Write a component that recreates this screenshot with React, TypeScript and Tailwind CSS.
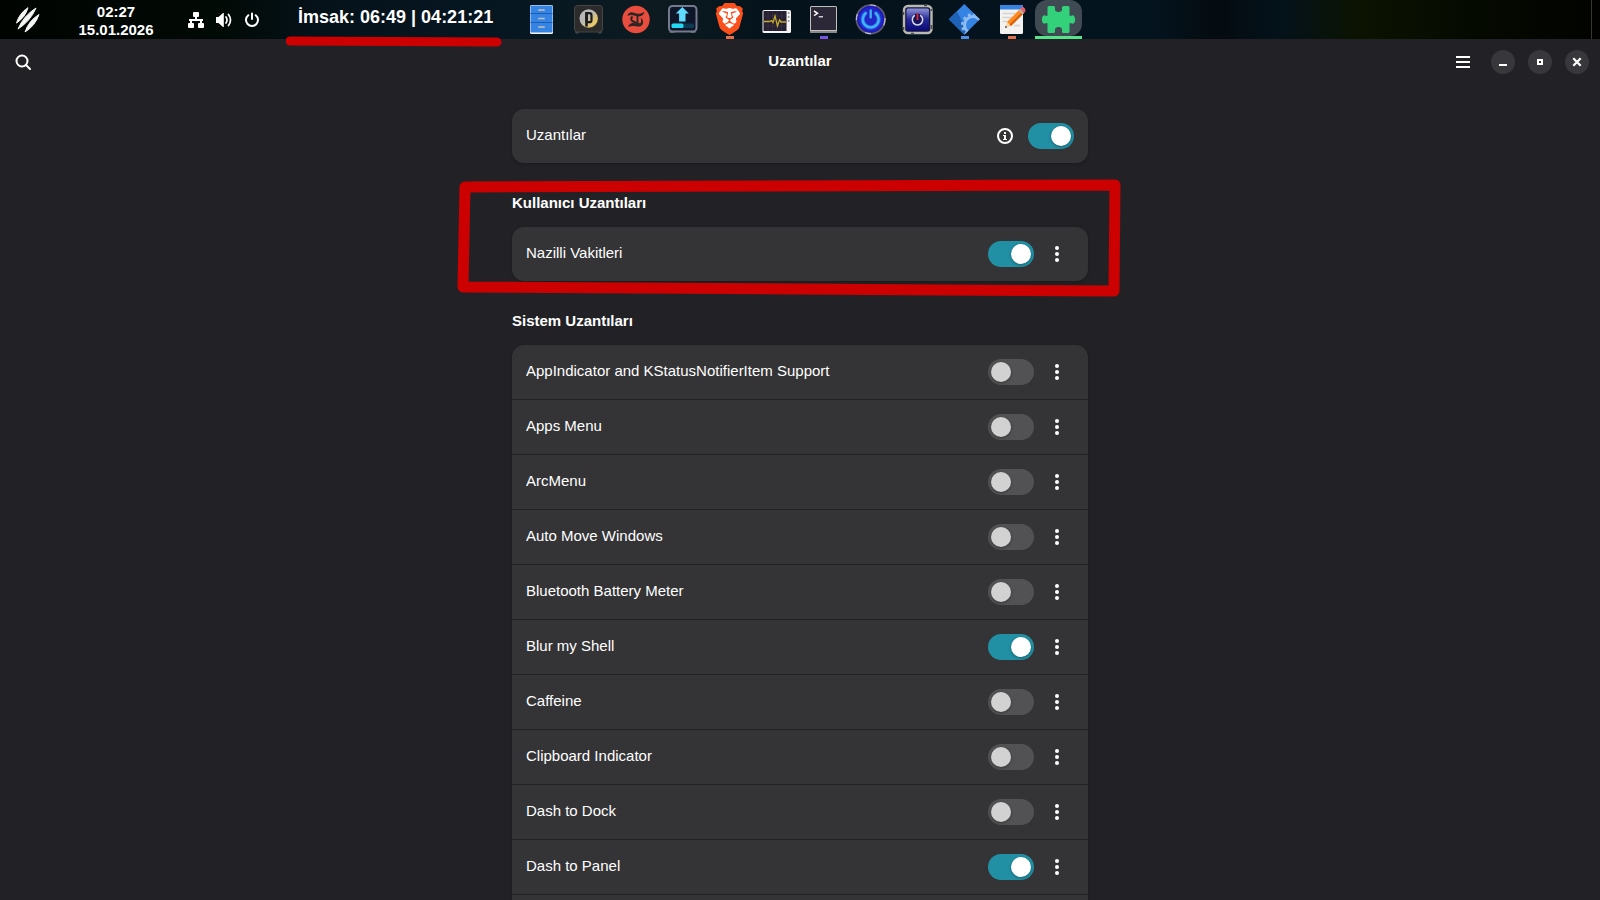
import { useState } from 'react'
import type { ReactNode } from 'react'
import { SiBrave } from 'react-icons/si'

interface Extension {
  id: string
  name: string
  enabled: boolean
}

interface DockItem {
  name: string
  icon: ReactNode
  indicator?: string
  active?: boolean
}

const userExtensions: Extension[] = [
  { id: 'nazilli-vakitleri', name: 'Nazilli Vakitleri', enabled: true },
]

const systemExtensions: Extension[] = [
  { id: 'appindicator', name: 'AppIndicator and KStatusNotifierItem Support', enabled: false },
  { id: 'apps-menu', name: 'Apps Menu', enabled: false },
  { id: 'arcmenu', name: 'ArcMenu', enabled: false },
  { id: 'auto-move-windows', name: 'Auto Move Windows', enabled: false },
  { id: 'bluetooth-battery', name: 'Bluetooth Battery Meter', enabled: false },
  { id: 'blur-my-shell', name: 'Blur my Shell', enabled: true },
  { id: 'caffeine', name: 'Caffeine', enabled: false },
  { id: 'clipboard-indicator', name: 'Clipboard Indicator', enabled: false },
  { id: 'dash-to-dock', name: 'Dash to Dock', enabled: false },
  { id: 'dash-to-panel', name: 'Dash to Panel', enabled: true },
]

// All dock icons are drawn on a 47x39 slot
const dockItems: DockItem[] = [
  {
    name: 'Dosyalar',
    icon: (
      <>
        <rect x="12" y="5" width="23" height="29" rx="1.5" fill="#f6f5f4" />
        <rect x="12.5" y="5.5" width="22" height="27" rx="1" fill="#3584e4" />
        <path d="M12.5 13.5h22M12.5 22.5h22" stroke="#1a5fb4" strokeWidth="1" />
        <path d="M21 11v-1h5v1M21 19.500v-1h5v1M21 28v-1h5v1" fill="none" stroke="#c0bfbc" strokeWidth="1.3" />
      </>
    ),
  },
  {
    name: 'Plank',
    icon: (
      <>
        <defs>
          <linearGradient id="coin" x1="0" y1="0" x2="1" y2="1">
            <stop offset="0.4" stopColor="#b8b8b8" />
            <stop offset="0.75" stopColor="#e6c66a" />
          </linearGradient>
        </defs>
        <path d="M10 29h27v3l-1 1.5h-2.500v-1.500h-20v1.500h-2.500l-1-1.500z" fill="#4a4a4a" />
        <rect x="9.500" y="5.500" width="28" height="26.500" rx="3" fill="#2b2b2b" stroke="#454545" />
        <circle cx="23.700" cy="18.500" r="9.200" fill="url(#coin)" />
        <path d="M21.500 12v14.500" stroke="#1b1b1b" strokeWidth="2.600" />
        <rect x="21.500" y="13.200" width="5" height="9" rx="2" fill="none" stroke="#1b1b1b" strokeWidth="2.200" />
      </>
    ),
  },
  {
    name: 'Takvim',
    icon: (
      <>
        <circle cx="24" cy="19.500" r="13.700" fill="#e74c3c" />
        <path d="M15.500 16c.5-3.500 3.500-4.500 6.500-3.200 3.300 1.400 6 1.700 10.500-1-.8 3.600-3.500 5-7 4.500-3.500-.6-6.500-2.300-10-.3z" fill="#2c2523" />
        <path d="M20.500 16.500c-2.200 2-1.500 4 .8 5s4.200 2.500 6.700 3" fill="none" stroke="#2c2523" strokeWidth="2" />
        <path d="M25.500 15.500v8" stroke="#2c2523" strokeWidth="1.800" />
        <path d="M28.500 17.500c3.500 2.500 3.500 6.500.5 8.500-3 1.800-7.500-1.500-13 1 1-3 3.500-4.500 6.500-3.700 3 .7 5 1.200 6-.3s1-3.300 0-5.500z" fill="#2c2523" />
      </>
    ),
  },
  {
    name: 'Yükleyici',
    icon: (
      <>
        <path d="M10.500 30h26v3h-5v-1h-16v1h-5z" fill="#555a68" />
        <rect x="10" y="6" width="27.500" height="25.500" rx="3.500" fill="#10162a" stroke="#747b8c" strokeWidth="2" />
        <path d="M23.300 7l6.500 6.500h-3.300v8h-6.400v-8h-3.300z" fill="#5fdcff" />
        <rect x="12.500" y="23.500" width="22.500" height="4.500" rx="1.500" fill="#0c3a50" />
        <rect x="12.500" y="23.500" width="12" height="4.500" rx="1.500" fill="#22d9f5" />
      </>
    ),
  },
  {
    name: 'Brave',
    indicator: 'bg-[#e2714f]',
    icon: (
      <>
        <path d="M15 7h17l3 6-3 14-8.500 6-8.500-6-3-14z" fill="#fff" />
        <SiBrave x="7.500" y="3" size={32} color="#fb4f1c" />
      </>
    ),
  },
  {
    name: 'Sistem Monitörü',
    icon: (
      <>
        <rect x="9.500" y="10" width="28.500" height="23" rx="1.500" fill="#f6f5f4" />
        <rect x="10.500" y="11" width="23" height="20" fill="#241f31" />
        <path d="M15 11v20M19.500 11v20M24 11v20M28.500 11v20M10.500 16h23M10.500 21h23M10.500 26h23" stroke="#3d3846" strokeWidth="0.6" />
        <path d="M11 21.500h5.500l2-1 1.500 2 2-6.500 2.500 10 2-6 1.500 2h5" fill="none" stroke="#c4a92e" strokeWidth="1.300" />
        <g fill="#9a9996">
          <circle cx="35.700" cy="13" r="1" />
          <circle cx="35.700" cy="17" r="1" />
          <circle cx="35.700" cy="21" r="1" />
        </g>
      </>
    ),
  },
  {
    name: 'Uçbirim',
    indicator: 'bg-[#7a52e0]',
    icon: (
      <>
        <rect x="10" y="6" width="27" height="27" rx="1.500" fill="#c0bfbc" />
        <path d="M10 31h27v.5q0 1.500-1.500 1.500h-24q-1.500 0-1.500-1.500z" fill="#8a888c" />
        <rect x="11" y="7" width="25" height="23" rx="0.500" fill="#2d2838" />
        <path d="M14 11l3.500 2.300-3.500 2.300" fill="none" stroke="#f6f5f4" strokeWidth="1.500" />
        <path d="M18.700 16.800h4.300" stroke="#f6f5f4" strokeWidth="1.200" />
      </>
    ),
  },
  {
    name: 'Güç Yöneticisi',
    icon: (
      <>
        <circle cx="23.700" cy="19.300" r="14.300" fill="#2018b8" stroke="#5d5f6c" strokeWidth="1.600" />
        <circle cx="23.700" cy="19.300" r="14.300" fill="none" stroke="#c4c5cc" strokeWidth="1.200" strokeDasharray="6 16" />
        <circle cx="23.700" cy="19.300" r="12" fill="#2226c4" />
        <path d="M18.500 13.300a8 8 0 1 0 10.400 0" fill="none" stroke="#2a66e8" strokeWidth="4" strokeLinecap="round" />
        <path d="M18.500 13.300a8 8 0 1 0 10.400 0M23.700 10.500v7" fill="none" stroke="#3fb4f5" strokeWidth="2.300" strokeLinecap="round" />
      </>
    ),
  },
  {
    name: 'Oturum Kapat',
    icon: (
      <>
        <defs>
          <linearGradient id="glass" x1="0" y1="0" x2="0" y2="1">
            <stop offset="0" stopColor="#8d94d8" />
            <stop offset="0.5" stopColor="#252894" />
            <stop offset="1" stopColor="#0a0a78" />
          </linearGradient>
        </defs>
        <rect x="10" y="6" width="27.500" height="27" rx="4" fill="#151540" stroke="#b9b9b2" strokeWidth="2.400" />
        <path d="M9.500 12v3M9.500 27v3M17 33.500h3M37.500 9v2M30 5.500h3M37.500 25v4" stroke="#4b4b45" strokeWidth="1.500" />
        <rect x="12.500" y="8.500" width="22.500" height="22" rx="1.500" fill="url(#glass)" />
        <circle cx="23.500" cy="19.800" r="6.300" fill="#14145e" />
        <path d="M20.800 15.300a5.200 5.200 0 1 0 5.400 0" fill="none" stroke="#d9d9ea" strokeWidth="1.600" />
        <path d="M23.500 13.500v6.500" stroke="#e0252c" strokeWidth="1.800" />
      </>
    ),
  },
  {
    name: 'Ayarlar',
    indicator: 'bg-[#4a90e2]',
    icon: (
      <>
        <defs>
          <clipPath id="diamond">
            <path d="M23.300 4l15.500 15.300-15.500 15.500-15.500-15.500z" />
          </clipPath>
        </defs>
        <g clipPath="url(#diamond)">
          <rect x="7" y="3" width="33" height="33" fill="#3584e4" />
          <path d="M7 19.300l8.500-8.500 14 25.200h-22.500z" fill="#1f63b8" />
          <circle cx="32" cy="25" r="8.500" fill="none" stroke="#8fbcf2" strokeWidth="3" />
          <circle cx="32" cy="25" r="10.800" fill="none" stroke="#8fbcf2" strokeWidth="2.400" strokeDasharray="2.830 2.830" />
        </g>
      </>
    ),
  },
  {
    name: 'Metin Düzenleyici',
    indicator: 'bg-[#e2714f]',
    icon: (
      <>
        <rect x="12" y="5" width="23" height="29" rx="1.500" fill="#f3f2f1" />
        <path d="M12 9.500v-3q0-1.500 1.500-1.500h20q1.500 0 1.500 1.500v3z" fill="#3584e4" />
        <path d="M14.500 13.500h13M14.500 17.500h9M14.500 21.500h5M26 25.500h6" stroke="#d5d3cf" strokeWidth="1.500" />
        <path d="M17 28l2-6 4 4z" fill="#f5d7a8" />
        <path d="M17 28l.8-2.200 1.400 1.400z" fill="#241f31" />
        <path d="M19 22l13-13 4 4-13 13z" fill="#ff8a1f" />
        <path d="M21.500 24.500l13-13 1.500 1.500-13 13z" fill="#d9600a" />
        <path d="M30.500 10.500l1.500-1.500 4 4-1.500 1.500z" fill="#b7b4ae" />
        <path d="M32 9l1.500-1.500q1.500-1 3 .5t.8 3.500l-1.300 1.500z" fill="#e8616b" />
      </>
    ),
  },
  {
    name: 'Uzantılar',
    active: true,
    icon: (
      <path
        d="M14 6h4q2.500 0 2 2.300c-.5 2.500 1 3.700 3.500 3.700s4-1.200 3.500-3.700q-.5-2.300 2-2.300h4q1.500 0 1.500 1.500v7.500q0 1.500 1.500.8q2.800-1.300 3.700 1.200q.8 2.500 0 5q-.9 2.500-3.700 1.200q-1.500-.7-1.500.8v7.500q0 1.500-1.500 1.500h-4q-2.500 0-2-2.300c.5-2.500-1-3.700-3.500-3.700s-4 1.200-3.500 3.700q.5 2.300-2 2.300h-4q-1.500 0-1.500-1.500v-7.500q0-1.500-1.500-.8q-2.800 1.300-3.700-1.200q-.8-2.500 0-5q.9-2.500 3.700-1.200q1.500.7 1.500-.8v-7.500q0-1.500 1.500-1.500z"
        fill="#33d17a"
      />
    ),
  },
]

function Switch({
  id,
  checked,
  onChange,
}: {
  id: string
  checked: boolean
  onChange: (checked: boolean) => void
}) {
  return (
    <input
      id={id}
      type="checkbox"
      role="switch"
      checked={checked}
      onChange={(e) => onChange(e.target.checked)}
      className="h-[26px] w-[46px] shrink-0 appearance-none rounded-full bg-[#525254] p-[3px] before:block before:size-5 before:rounded-full before:bg-[#d2d2d2] before:shadow-[0_1px_3px_rgba(0,0,0,0.35)] checked:bg-[#2190a4] checked:before:translate-x-5 checked:before:bg-white"
    />
  )
}

function ExtensionRow({ extension }: { extension: Extension }) {
  const [enabled, setEnabled] = useState(extension.enabled)

  return (
    <li className="flex items-center gap-1.5 px-3.5 py-2.5">
      <label htmlFor={extension.id} className="flex-1 truncate pb-0.5">
        {extension.name}
      </label>
      <Switch id={extension.id} checked={enabled} onChange={setEnabled} />
      <button
        type="button"
        aria-label={`${extension.name} seçenekleri`}
        className="flex size-[34px] items-center justify-center rounded-lg"
      >
        <svg viewBox="0 0 16 16" className="size-4" fill="#fff">
          <circle cx="8" cy="2" r="2" />
          <circle cx="8" cy="8" r="2" />
          <circle cx="8" cy="14" r="2" />
        </svg>
      </button>
    </li>
  )
}

function ExtensionGroup({
  title,
  extensions,
  children,
}: {
  title: string
  extensions: Extension[]
  children?: ReactNode
}) {
  return (
    <section className="relative mt-7">
      <h2 className="mb-3 leading-6 font-bold">{title}</h2>
      <ul className="divide-y divide-[#212124] rounded-xl bg-[#343436] shadow-[0_1px_3px_rgba(0,0,0,0.25)]">
        {extensions.map((extension) => (
          <ExtensionRow key={extension.id} extension={extension} />
        ))}
        {extensions.length > 1 && <li className="h-[54px]" />}
      </ul>
      {children}
    </section>
  )
}

function TopPanel() {
  return (
    <nav className="flex h-[39px] shrink-0 bg-[linear-gradient(90deg,#000401_0%,#020a06_14%,#05121a_20%,#061722_32%,#0d1b20_41%,#04121b_48%,#04141e_72%,#050b10_76%,#04121a_80%,#0c1301_85%,#050a01_92%,#020300_100%)]">
      <div className="flex w-[518px] shrink-0">
        <button type="button" aria-label="Etkinlikler" className="flex w-14 items-center justify-center">
          <svg viewBox="0 0 26 26" className="size-[26px]" fill="#f5f5f5" stroke="#f5f5f5" strokeLinejoin="round">
            <path d="M1.500 16Q4.200 6.300 13 .7 10.200 10.500 1.500 16z" />
            <path d="M3 22Q8.700 8.700 21 1 15.300 14.300 3 22z" />
            <path d="M10 25Q13.800 13.600 24 7.500 20.200 18.800 10 25z" />
          </svg>
        </button>
        <button type="button" className="flex w-[120px] flex-col items-center pt-[3px] leading-[18px] font-bold">
          <span>02:27</span>
          <span>15.01.2026</span>
        </button>
        <button type="button" aria-label="Sistem menüsü" className="flex w-[122px] items-center gap-3 pl-3">
          <svg viewBox="0 0 16 16" className="size-4" fill="#fff">
            <rect x="5" y="0" width="6" height="5" rx="1" />
            <rect x="0" y="11" width="6" height="5" rx="1" />
            <rect x="10" y="11" width="6" height="5" rx="1" />
            <path d="M7 4h2v3h6v2h-1v3h-2v-3h-8v3h-2v-3h-1v-2h6z" />
          </svg>
          <svg viewBox="0 0 16 16" className="size-4" fill="#fff">
            <path d="M0 5h2.500l4.500-4h.8v14h-.8l-4.500-4h-2.500z" />
            <path d="M10 5q2 3 0 6M12.500 2.500q4 5.500 0 11" fill="none" stroke="#fff" strokeWidth="1.700" strokeLinecap="round" />
          </svg>
          <svg viewBox="0 0 16 16" className="size-4" fill="none" stroke="#fff" strokeWidth="2" strokeLinecap="round">
            <path d="M4.300 3.200a6 6 0 1 0 7.400 0M8 1.500v5.500" />
          </svg>
        </button>
        <div className="relative pt-[5px] text-lg leading-6 font-bold whitespace-nowrap">
          İmsak: 06:49 | 04:21:21
          <svg className="pointer-events-none absolute top-9 -left-3 z-10 h-3 w-[220px]" viewBox="0 0 220 12">
            <path d="M4 5l207 1" stroke="#cc0000" strokeWidth="9" strokeLinecap="round" />
          </svg>
        </div>
      </div>
      <ul className="flex">
        {dockItems.map((item) => (
          <li key={item.name}>
            <button type="button" aria-label={item.name} className="relative block h-[39px] w-[47px]">
              {item.active && <span className="absolute inset-x-0 top-0 h-9 rounded-xl bg-[#3f4a52]" />}
              <svg viewBox="0 0 47 39" className="relative h-[39px] w-[47px]">
                {item.icon}
              </svg>
              {item.indicator && (
                <span className={`absolute bottom-0 left-5 h-[3px] w-2 ${item.indicator}`} />
              )}
              {item.active && <span className="absolute inset-x-0 bottom-0 h-[3px] bg-[#57e389]" />}
            </button>
          </li>
        ))}
      </ul>
      <button type="button" aria-label="Masaüstünü göster" className="ml-auto w-[9px] border-l border-[#343732]" />
    </nav>
  )
}

function HeaderBar() {
  const windowButton = 'flex size-6 items-center justify-center rounded-full bg-[#38383c]'

  return (
    <header className="grid h-[46px] shrink-0 grid-cols-3 items-center px-[11px]">
      <button type="button" aria-label="Ara" className="flex size-6 items-center justify-center">
        <svg viewBox="0 0 16 16" className="size-4" fill="none" stroke="#fff" strokeWidth="2">
          <circle cx="7" cy="7" r="5.500" />
          <path d="M11 11l4 4" strokeLinecap="round" />
        </svg>
      </button>
      <h1 className="pb-0.5 text-center font-bold">Uzantılar</h1>
      <div className="flex items-center justify-end gap-[13px]">
        <button type="button" aria-label="Ana menü" className="flex size-[30px] items-center justify-center">
          <svg viewBox="0 0 16 16" className="size-4" fill="#fff">
            <path d="M1 2h14v2h-14zM1 7h14v2h-14zM1 12h14v2h-14z" />
          </svg>
        </button>
        <button type="button" aria-label="Küçült" className={windowButton}>
          <svg viewBox="0 0 16 16" className="size-4" fill="#fff">
            <path d="M4 10h8v2h-8z" />
          </svg>
        </button>
        <button type="button" aria-label="Büyüt" className={windowButton}>
          <svg viewBox="0 0 16 16" className="size-4" fill="none" stroke="#fff" strokeWidth="2">
            <path d="M6 6h4v4h-4z" />
          </svg>
        </button>
        <button type="button" aria-label="Kapat" className={windowButton}>
          <svg viewBox="0 0 16 16" className="size-4" fill="none" stroke="#fff" strokeWidth="2.200">
            <path d="M4.300 4.300l7.400 7.400M11.700 4.300l-7.400 7.400" />
          </svg>
        </button>
      </div>
    </header>
  )
}

export default function App() {
  const [allEnabled, setAllEnabled] = useState(true)

  return (
    <div className="flex h-screen flex-col overflow-hidden bg-[#222226] font-['Liberation_Sans',Arial,sans-serif] text-[15px] leading-5 text-white">
      <TopPanel />
      <HeaderBar />
      <main className="min-h-0 flex-1 overflow-hidden px-6 pt-6">
        <div className="mx-auto max-w-xl">
          <div className="flex items-center gap-1.5 rounded-xl bg-[#343436] px-3.5 py-2.5 shadow-[0_1px_3px_rgba(0,0,0,0.25)]">
            <label htmlFor="all-extensions" className="flex-1 pb-0.5">
              Uzantılar
            </label>
            <button type="button" aria-label="Bilgi" className="flex size-[34px] items-center justify-center">
              <svg viewBox="0 0 16 16" className="size-4">
                <circle cx="8" cy="8" r="7" fill="none" stroke="#fff" strokeWidth="2" />
                <path d="M7 4h2v2h-2zM6 7h3v4h1v1h-4v-1h1v-3h-1z" fill="#fff" />
              </svg>
            </button>
            <Switch id="all-extensions" checked={allEnabled} onChange={setAllEnabled} />
          </div>

          <ExtensionGroup title="Kullanıcı Uzantıları" extensions={userExtensions}>
            <svg className="pointer-events-none absolute -top-3 -left-14 h-[120px] w-[670px]" viewBox="0 0 670 120">
              <path
                d="M9 8L659 6L658 112L7 108z"
                fill="none"
                stroke="#cc0000"
                strokeWidth="11"
                strokeLinejoin="round"
              />
            </svg>
          </ExtensionGroup>

          <ExtensionGroup title="Sistem Uzantıları" extensions={systemExtensions} />
        </div>
      </main>
    </div>
  )
}
